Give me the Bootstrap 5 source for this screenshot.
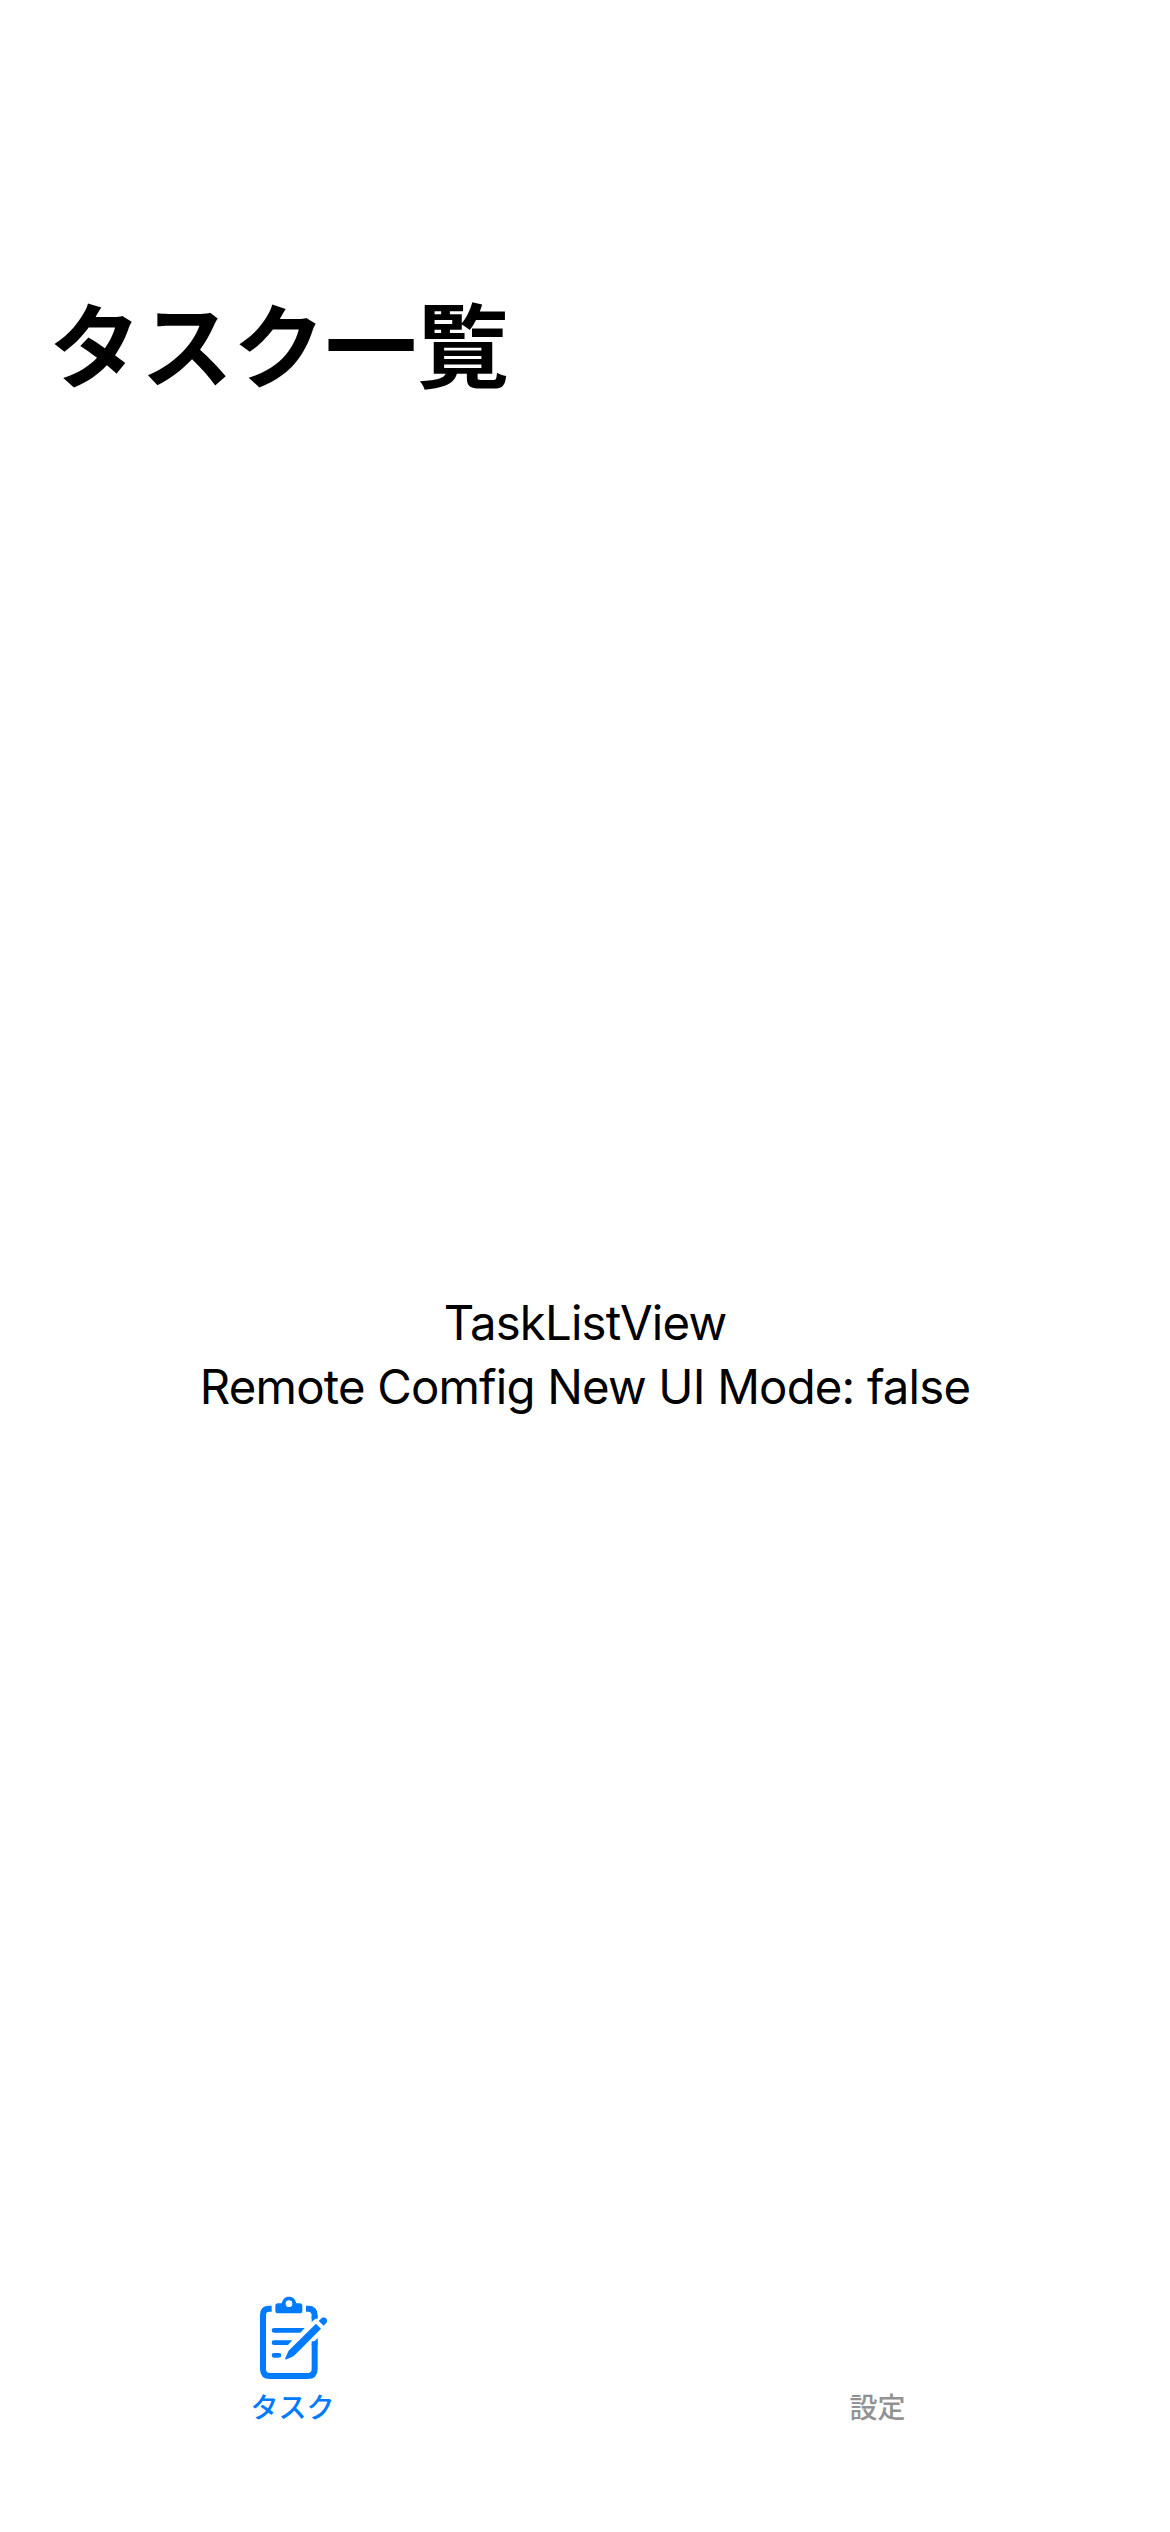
<!DOCTYPE html>
<html lang="ja">
<head>
<meta charset="utf-8">
<meta name="viewport" content="width=device-width, initial-scale=1">
<title>タスク一覧</title>
<link href="https://cdn.jsdelivr.net/npm/bootstrap@5.3.0/dist/css/bootstrap.min.css" rel="stylesheet">
<style>
  body { font-family: Inter, "Noto Sans CJK JP", sans-serif; color: #000; background: #fff; }
  .page-head { padding: 281px 0 0 49px; height: 420px; }
  .page-title { font-family: "Noto Sans CJK JP", sans-serif; font-weight: 700; font-size: 92px; line-height: 120px; }
  .page-body { padding-top: 5px; }
  .body-text { font-size: 47.3px; line-height: 64px; letter-spacing: -0.8px; }
  .tabs-bar { height: 247px; font-family: "Noto Sans CJK JP", sans-serif; font-size: 28px; line-height: 36px; font-weight: 500; }
  .tab-link { color: #929292; text-decoration: none; }
  .tab-link.active { color: #007aff; }
  .tab-icon { width: 105px; height: 100px; margin-bottom: 3px; }
</style>
<script src="https://cdn.jsdelivr.net/npm/bootstrap@5.3.0/dist/js/bootstrap.bundle.min.js"></script>
</head>
<body>
<div class="d-flex flex-column vh-100 overflow-hidden">
  <header class="page-head flex-shrink-0"><h1 class="page-title m-0">タスク一覧</h1></header>
  <main class="page-body flex-grow-1 d-flex flex-column align-items-center justify-content-center text-center">
    <div class="body-text">TaskListView</div>
    <div class="body-text">Remote Comfig New UI Mode: false</div>
  </main>
  <nav class="tabs-bar row g-0 flex-shrink-0">
    <a href="#" class="tab-link active col-6 d-flex flex-column align-items-center" aria-current="page">
      <svg class="tab-icon" viewBox="0 0 315 300" fill="currentColor" aria-hidden="true">
        <g fill="none" stroke="currentColor" stroke-width="18">
          <path d="M95 71H88Q69 71 69 90V252Q69 273 90 273H203Q224 273 224 252V169"/>
          <path d="M198 71H204Q224 71 224 91V101"/>
        </g>
        <path d="M215 92H233V95L215 111ZM233 159V180H215V177Z"/>
        <path fill-rule="evenodd" d="M114 55H125C128 43 135 35 147 35S166 43 169 55H179Q187 55 187 63V77Q187 85 179 85H114Q106 85 106 77V63Q106 55 114 55ZM147 46A10 10 0 1 0 147 66A10 10 0 1 0 147 46Z"/>
        <path d="M102 129H194L181 143H102A7 7 0 0 1 102 129ZM102 166H157L144 180H102A7 7 0 0 1 102 166ZM102 204H117A7 7 0 0 1 117 218H102A7 7 0 0 1 102 204Z"/>
        <path d="M228 116L243 131L164 211Q161 214 157 215L140 223Q134 225 136 219L144 201Q145 198 148 195ZM236 108L243 101C248 95 256 97 259 101C263 106 262 111 258 115L251 122Z"/>
      </svg>
      <span>タスク</span>
    </a>
    <a href="#" class="tab-link col-6 d-flex flex-column align-items-center">
      <span class="tab-icon"></span>
      <span>設定</span>
    </a>
  </nav>
</div>
</body>
</html>
